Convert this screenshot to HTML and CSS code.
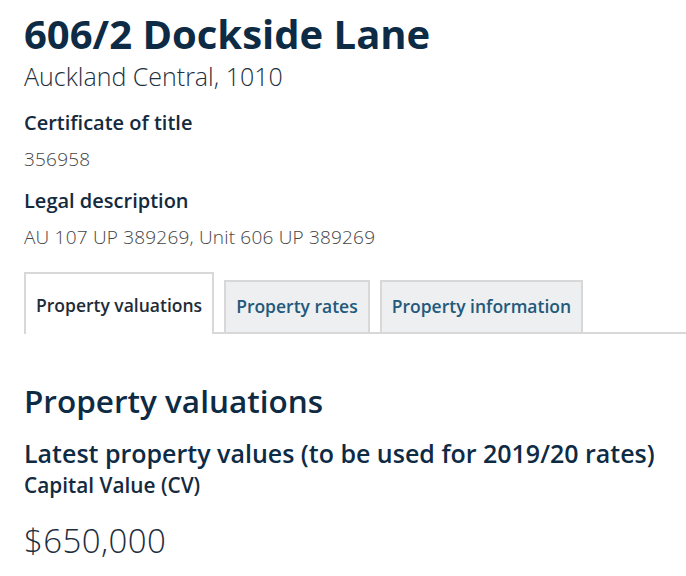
FILE: index.html
```html
<!DOCTYPE html>
<html lang="en">
<head>
<meta charset="utf-8">
<title>606/2 Dockside Lane</title>
<link rel="stylesheet" href="styles.css">
</head>
<body>
<main class="page">
  <header class="address">
    <h1 class="address-title">606/2 Dockside Lane</h1>
    <p class="address-suburb">Auckland Central, 1010</p>
  </header>
  <dl class="details">
    <dt class="details-label">Certificate of title</dt>
    <dd class="details-value">356958</dd>
    <dt class="details-label">Legal description</dt>
    <dd class="details-value">AU 107 UP 389269, Unit 606 UP 389269</dd>
  </dl>
  <nav class="tabs">
    <a class="tab tab-active" href="#">Property valuations</a>
    <a class="tab" href="#">Property rates</a>
    <a class="tab" href="#">Property information</a>
  </nav>
  <section class="panel">
    <h2 class="panel-title">Property valuations</h2>
    <h3 class="panel-subtitle">Latest property values (to be used for 2019/20 rates)</h3>
    <p class="value-label">Capital Value (CV)</p>
    <p class="value-amount">$650,000</p>
  </section>
</main>
</body>
</html>
```

FILE: styles.css
```css
* { box-sizing: border-box; }
html, body { margin: 0; padding: 0; background: #ffffff; }
body {
  font-family: "Open Sans", "Noto Sans", "Liberation Sans", sans-serif;
  color: #1b2b3a;
}
.page {
  padding: 10px 0 0 24px;
}
.address-title {
  margin: 0;
  font-size: 40px;
  line-height: 48px;
  font-weight: 700;
  color: #0e2b45;
}
.address-suburb {
  margin: 3px 0 0;
  font-size: 25px;
  line-height: 30px;
  font-weight: 300;
  color: #1e2f3e;
}
.details {
  margin: 19px 0 0;
}
.details-label {
  margin: 16px 0 0;
  font-size: 20px;
  line-height: 26px;
  font-weight: 600;
  color: #142a3e;
}
.details-label:first-child { margin-top: 0; }
.details-value {
  margin: 10px 0 0;
  font-size: 19px;
  line-height: 26px;
  font-weight: 300;
  letter-spacing: 0.2px;
  color: #444;
}
.tabs {
  display: flex;
  align-items: flex-end;
  gap: 10px;
  margin-top: 22px;
  border-bottom: 2px solid #d8d8d8;
}
.tab {
  display: block;
  padding: 12px 10px 14px;
  font-size: 17.5px;
  line-height: 24px;
  font-weight: 600;
  color: #23597a;
  text-decoration: none;
  background: #eeeff0;
  border: 2px solid #d8d8d8;
  border-bottom: 0;
}
.tab-active {
  padding: 19px 10px 17px 10px;
  margin-bottom: -2px;
  background: #ffffff;
  color: #1f2b36;
}
.panel-title {
  margin: 48px 0 0;
  font-size: 31.5px;
  line-height: 38px;
  font-weight: 600;
  color: #0e2b45;
}
.panel-subtitle {
  margin: 17px 0 0;
  font-size: 25px;
  line-height: 32px;
  font-weight: 600;
  color: #0e2b45;
}
.value-label {
  margin: 3px 0 0;
  font-size: 20.8px;
  line-height: 26px;
  font-weight: 600;
  color: #142a3e;
}
.value-amount {
  margin: 23px 0 0;
  font-size: 33px;
  line-height: 40px;
  font-weight: 300;
  letter-spacing: 0.4px;
  color: #1c2e3e;
}
```
